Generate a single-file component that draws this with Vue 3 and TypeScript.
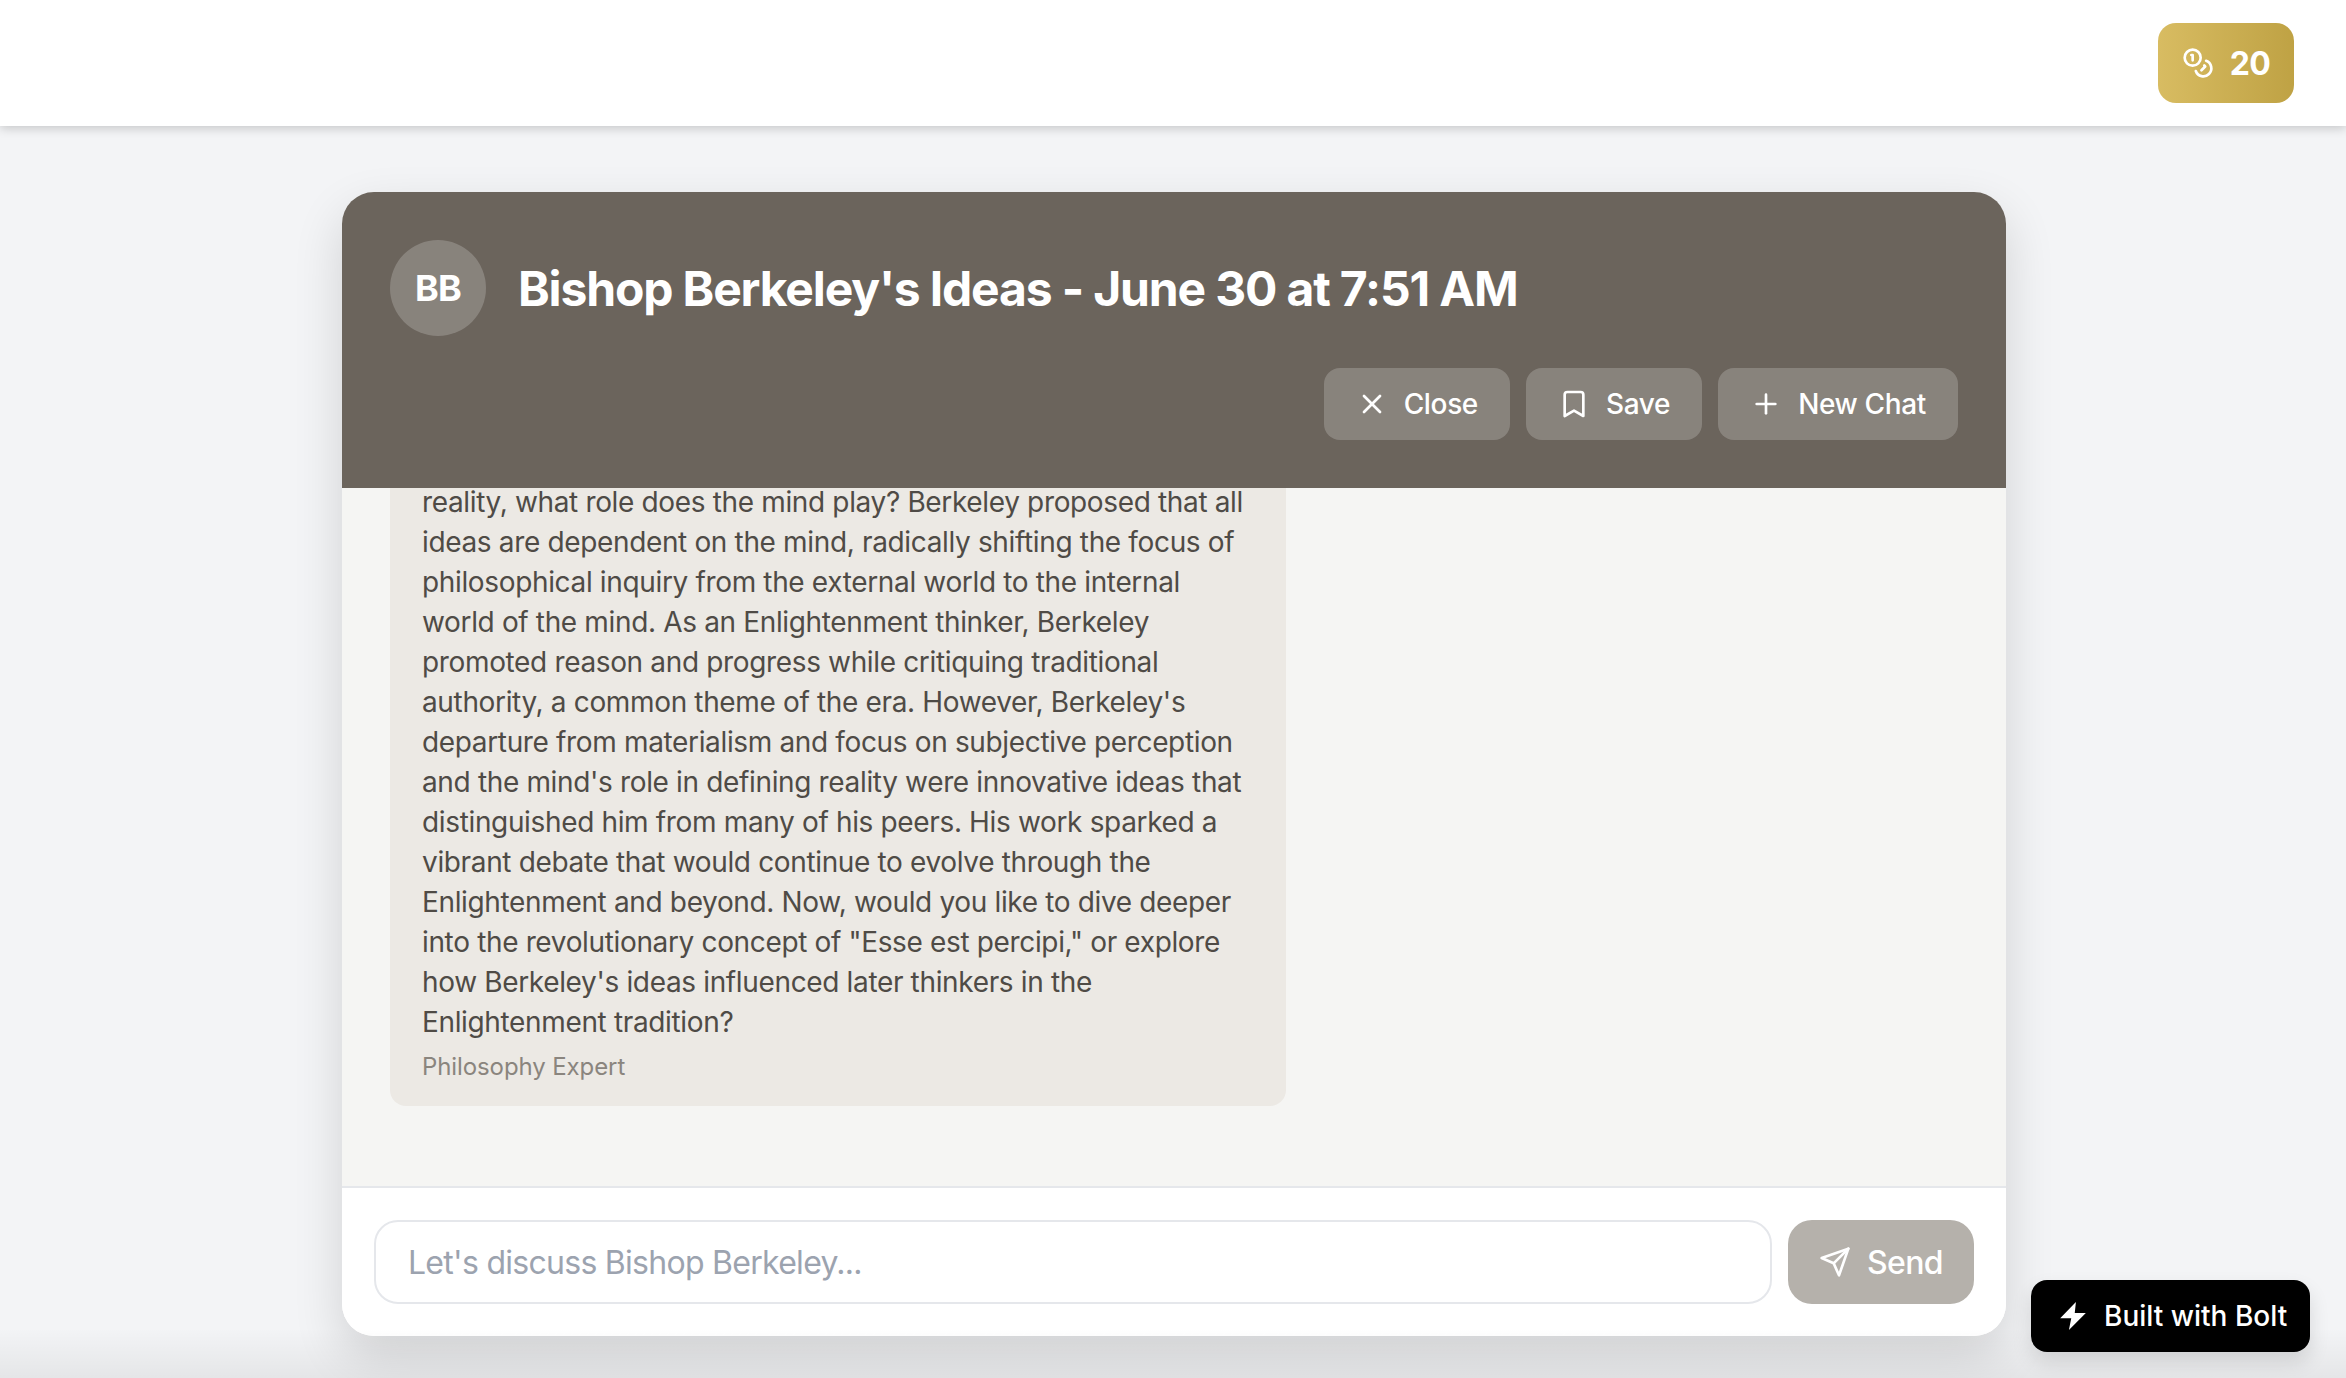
<script setup lang="ts">
const paragraph = `reality, what role does the mind play? Berkeley proposed that all ideas are dependent on the mind, radically shifting the focus of philosophical inquiry from the external world to the internal world of the mind. As an Enlightenment thinker, Berkeley promoted reason and progress while critiquing traditional authority, a common theme of the era. However, Berkeley's departure from materialism and focus on subjective perception and the mind's role in defining reality were innovative ideas that distinguished him from many of his peers. His work sparked a vibrant debate that would continue to evolve through the Enlightenment and beyond. Now, would you like to dive deeper into the revolutionary concept of "Esse est percipi," or explore how Berkeley's ideas influenced later thinkers in the Enlightenment tradition?`
</script>

<template>
  <div class="page">
    <header class="topbar">
      <button class="coins" type="button">
        <svg class="coins__icon" viewBox="0 0 24 24" fill="none" stroke="currentColor" stroke-width="2" stroke-linecap="round" stroke-linejoin="round">
          <circle cx="8" cy="8" r="6" />
          <path d="M18.09 10.37A6 6 0 1 1 10.34 18" />
          <path d="M7 6h1v4" />
          <path d="m16.71 13.88.7.71-2.82 2.82" />
        </svg>
        <span>20</span>
      </button>
    </header>

    <main class="main">
      <section class="chat">
        <div class="chat__head">
          <div class="chat__title-row">
            <div class="avatar">BB</div>
            <h1 class="chat__title">Bishop Berkeley's Ideas - June 30 at 7:51 AM</h1>
          </div>
          <div class="chat__actions">
            <button class="action" type="button">
              <svg class="action__icon" viewBox="0 0 24 24" fill="none" stroke="currentColor" stroke-width="2" stroke-linecap="round" stroke-linejoin="round">
                <path d="M18 6 6 18" />
                <path d="m6 6 12 12" />
              </svg>
              Close
            </button>
            <button class="action" type="button">
              <svg class="action__icon" viewBox="0 0 24 24" fill="none" stroke="currentColor" stroke-width="2" stroke-linecap="round" stroke-linejoin="round">
                <path d="m19 21-7-4-7 4V5a2 2 0 0 1 2-2h10a2 2 0 0 1 2 2v16z" />
              </svg>
              Save
            </button>
            <button class="action" type="button">
              <svg class="action__icon" viewBox="0 0 24 24" fill="none" stroke="currentColor" stroke-width="2" stroke-linecap="round" stroke-linejoin="round">
                <path d="M5 12h14" />
                <path d="M12 5v14" />
              </svg>
              New Chat
            </button>
          </div>
        </div>

        <div class="chat__messages">
          <article class="bubble">
            <p class="bubble__text">{{ paragraph }}</p>
            <p class="bubble__role">Philosophy Expert</p>
          </article>
        </div>

        <form class="chat__form" @submit.prevent>
          <input class="chat__input" type="text" placeholder="Let's discuss Bishop Berkeley..." />
          <button class="send" type="submit">
            <svg class="send__icon" viewBox="0 0 24 24" fill="none" stroke="currentColor" stroke-width="2" stroke-linecap="round" stroke-linejoin="round">
              <path d="m22 2-7 20-4-9-9-4Z" />
              <path d="M22 2 11 13" />
            </svg>
            Send
          </button>
        </form>
      </section>
    </main>

    <div class="bottom-fade"></div>

    <a class="bolt" href="#">
      <svg class="bolt__icon" viewBox="0 0 24 24" fill="currentColor">
        <path d="M14.5 0 1 14h9.5L8.5 24 23 9.5h-9.5L14.5 0z" />
      </svg>
      Built with Bolt
    </a>
  </div>
</template>

<style scoped>
.page {
  position: relative;
  display: flex;
  flex-direction: column;
  height: 1378px;
  overflow: hidden;
  background: #f3f4f6;
  font-family: Inter, "Liberation Sans", sans-serif;
}

.topbar {
  display: flex;
  justify-content: flex-end;
  align-items: center;
  flex: none;
  height: 126px;
  padding: 0 52px;
  background: #fff;
  box-shadow: 0 2px 10px rgba(0, 0, 0, 0.2);
  position: relative;
  z-index: 2;
}
.coins {
  display: flex;
  align-items: center;
  justify-content: center;
  gap: 16px;
  width: 136px;
  height: 80px;
  border: 0;
  border-radius: 18px;
  background: linear-gradient(to right, #d8bc62, #bfa244);
  color: #fff;
  font: 700 32px Inter, sans-serif;
  letter-spacing: -0.6px;
}
.coins__icon {
  width: 32px;
  height: 32px;
}

.main {
  flex: 1;
  min-height: 0;
  display: flex;
  justify-content: center;
  padding: 66px 0 42px 2px;
}
.chat {
  display: flex;
  flex-direction: column;
  width: 1664px;
  border-radius: 32px;
  background: #fff;
  box-shadow: 0 20px 50px rgba(0, 0, 0, 0.14);
  overflow: hidden;
}
.chat__head {
  flex: none;
  display: flex;
  flex-direction: column;
  gap: 32px;
  padding: 48px;
  background: #6b645c;
  color: #fff;
  position: relative;
  z-index: 1;
}
.chat__title-row {
  display: flex;
  align-items: center;
  gap: 32px;
}
.avatar {
  display: flex;
  align-items: center;
  justify-content: center;
  width: 96px;
  height: 96px;
  border-radius: 50%;
  background: rgba(255, 255, 255, 0.2);
  font-size: 36px;
  font-weight: 700;
  letter-spacing: -0.8px;
}
.chat__title {
  margin: 0;
  padding-top: 2px;
  font-size: 48px;
  line-height: 64px;
  font-weight: 700;
  letter-spacing: -1.15px;
}
.chat__actions {
  display: flex;
  justify-content: flex-end;
  gap: 16px;
}
.action {
  display: flex;
  align-items: center;
  gap: 16px;
  height: 72px;
  padding: 0 32px;
  border: 0;
  border-radius: 16px;
  background: rgba(255, 255, 255, 0.2);
  color: #fff;
  font: 500 28px Inter, sans-serif;
  letter-spacing: -0.35px;
}
.action__icon {
  width: 32px;
  height: 32px;
}

.chat__messages {
  flex: 1;
  min-height: 0;
  display: flex;
  flex-direction: column;
  justify-content: flex-end;
  overflow: hidden;
  padding: 0 48px 80px;
  background: #f5f5f3;
}
.bubble {
  flex: none;
  width: 896px;
  box-sizing: border-box;
  padding: 24px 32px 22px;
  border-radius: 16px;
  background: #ece9e4;
}
.bubble__text {
  margin: 0;
  font-size: 28px;
  line-height: 40px;
  letter-spacing: -0.35px;
  color: #4f4b46;
}
.bubble__role {
  margin: 8px 0 0;
  font-size: 24px;
  line-height: 34px;
  letter-spacing: -0.1px;
  color: #8a857e;
}

.chat__form {
  flex: none;
  display: flex;
  gap: 16px;
  padding: 32px;
  border-top: 2px solid #e5e7eb;
  background: #fff;
}
.chat__input {
  flex: 1;
  min-width: 0;
  height: 84px;
  box-sizing: border-box;
  padding: 0 32px;
  border: 2px solid #e5e7eb;
  border-radius: 24px;
  font: 400 32px Inter, sans-serif;
  letter-spacing: -0.72px;
  color: #4f4b46;
  outline: none;
}
.chat__input::placeholder {
  color: #9ca3af;
}
.send {
  display: flex;
  align-items: center;
  justify-content: center;
  gap: 16px;
  width: 186px;
  height: 84px;
  border: 0;
  border-radius: 24px;
  background: #b5b1ab;
  color: #fff;
  font: 500 32px Inter, sans-serif;
  letter-spacing: -0.6px;
}
.send__icon {
  width: 32px;
  height: 32px;
}

.bottom-fade {
  position: absolute;
  left: 0;
  right: 0;
  bottom: 0;
  height: 50px;
  background: linear-gradient(to bottom, rgba(0, 0, 0, 0), rgba(0, 0, 0, 0.06));
  pointer-events: none;
}

.bolt {
  position: absolute;
  right: 36px;
  bottom: 26px;
  display: flex;
  align-items: center;
  gap: 17px;
  box-sizing: border-box;
  width: 279px;
  height: 72px;
  padding-left: 28px;
  border-radius: 16px;
  background: #000;
  color: #fff;
  font-size: 28px;
  font-weight: 500;
  text-decoration: none;
  box-shadow: 0 10px 20px rgba(0, 0, 0, 0.12);
}
.bolt__icon {
  width: 28px;
  height: 28px;
}
</style>
